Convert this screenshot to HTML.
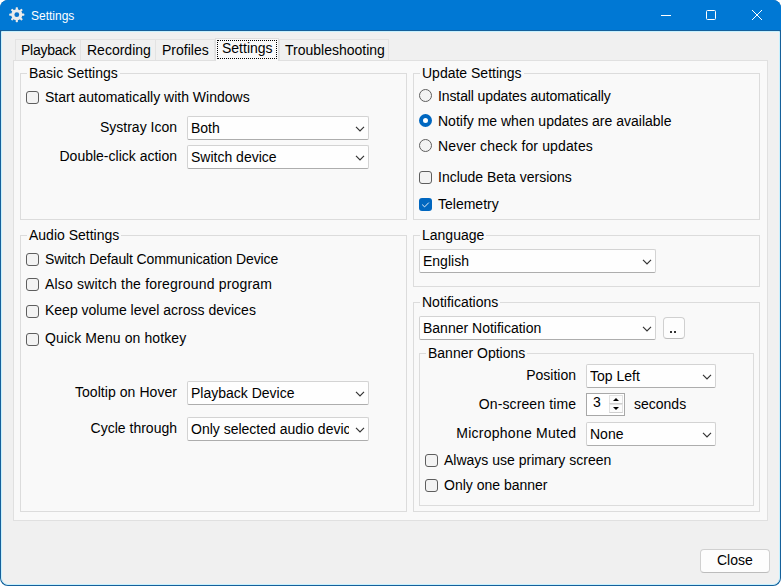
<!DOCTYPE html>
<html><head><meta charset="utf-8">
<style>
html,body{margin:0;padding:0;width:781px;height:586px;overflow:hidden;background:#ffffff;}
*{box-sizing:border-box;}
body{font-family:"Liberation Sans",sans-serif;font-size:14px;color:#000;position:relative;}
.a{position:absolute;}
.t{position:absolute;white-space:nowrap;line-height:16px;color:#000;}
#win{position:absolute;left:0;top:0;width:781px;height:586px;background:#16609a;border-radius:8px;overflow:hidden;}
#tb{position:absolute;left:0;top:0;width:781px;height:30px;background:#0078d4;}
#client{position:absolute;left:1px;top:31px;width:779px;height:554px;background:#f0f0f0;border-top:1px solid #c6f1ff;border-left:1px solid #c6f1ff;border-right:1px solid #c6f1ff;border-bottom:1px solid #c6f1ff;border-radius:0 0 7px 7px;}
.tab{position:absolute;top:39px;height:22px;background:#f0f0f0;border:1px solid #e3e3e3;border-bottom:none;}
#page{position:absolute;left:13px;top:60px;width:755px;height:461px;background:#f9f9f9;border:1px solid #e0e0e0;}
.grp{position:absolute;border:1px solid #dcdcdc;}
.gt{position:absolute;background:#f9f9f9;padding:0 2px;white-space:nowrap;line-height:16px;}
.cb{position:absolute;width:13px;height:13px;border:1px solid #5e5e5e;background:#f3f3f3;border-radius:3px;}
.cbc{position:absolute;width:13px;height:13px;background:#0067c0;border-radius:3px;}
.rb{position:absolute;width:13px;height:13px;border:1px solid #5e5e5e;background:#f3f3f3;border-radius:50%;}
.rbc{position:absolute;width:13px;height:13px;border:4px solid #0067c0;background:#fff;border-radius:50%;}
.combo{position:absolute;background:#fefefe;border:1px solid #d3d3d3;border-bottom-color:#adadad;border-radius:2px;}
.ct{position:absolute;white-space:nowrap;line-height:16px;overflow:hidden;}
.btn{position:absolute;background:#fdfdfd;border:1px solid #d0d0d0;border-bottom-color:#bcbcbc;border-radius:4px;}
</style></head><body>
<div id="win">
  <div id="tb">
    <svg class="a" style="left:9px;top:7px" width="16" height="16" viewBox="0 0 16 16">
      <g transform="translate(7.8 7.7)">
        <g fill="#ececec" stroke="#3a6a94" stroke-opacity="0.35" stroke-width="0.6" paint-order="stroke">
        <circle r="5.5"/>
        <rect x="-1.1" y="-7.5" width="2.2" height="15" rx="0.6"/>
        <rect x="-1.1" y="-7.5" width="2.2" height="15" rx="0.6" transform="rotate(45)"/>
        <rect x="-1.1" y="-7.5" width="2.2" height="15" rx="0.6" transform="rotate(90)"/>
        <rect x="-1.1" y="-7.5" width="2.2" height="15" rx="0.6" transform="rotate(135)"/>
        </g>
        <circle r="5.2" fill="#ececec"/>
        <circle r="2.4" fill="#0a74cc"/>
      </g>
    </svg>
    <div class="t" style="left:31px;top:8px;color:#fff;font-size:12px;">Settings</div>
    <div class="a" style="left:661px;top:15px;width:10px;height:1px;background:#fff"></div>
    <div class="a" style="left:706px;top:10px;width:10px;height:10px;border:1px solid #fff;border-radius:1.5px"></div>
    <svg class="a" style="left:752px;top:10px" width="10" height="10" viewBox="0 0 10 10"><path d="M0 0L10 10M10 0L0 10" stroke="#fff" stroke-width="1"/></svg>
  </div>
  <div id="client"></div>
</div>
<div class="tab" style="left:15px;width:66px;"></div>
<div class="tab" style="left:80px;width:76px;"></div>
<div class="tab" style="left:155px;width:60px;"></div>
<div class="tab" style="left:279px;width:110px;"></div>
<div id="page"></div>
<div class="tab" style="left:215px;top:38px;height:23px;width:64px;background:#f9f9f9;border-color:#dedede;"><div class="a" style="left:1px;top:1px;width:60px;height:19px;border:1px dotted #000;"></div></div>
<div class="t" style="left:21px;top:42px;letter-spacing:-0.25px;">Playback</div>
<div class="t" style="left:87px;top:42px;">Recording</div>
<div class="t" style="left:162px;top:42px;">Profiles</div>
<div class="t" style="left:222px;top:40px;">Settings</div>
<div class="t" style="left:285px;top:42px;">Troubleshooting</div>
<div class="grp" style="left:20px;top:73px;width:387px;height:147px;"></div>
<div class="gt" style="left:27px;top:65px;">Basic Settings</div>
<div class="cb" style="left:26px;top:91px;"></div>
<div class="t" style="left:45px;top:89px;">Start automatically with Windows</div>
<div class="t" style="right:604px;top:119px;">Systray Icon</div>
<div class="combo" style="left:187px;top:116px;width:182px;height:24px;"><div class="ct" style="left:3px;top:3px;width:158px">Both</div><svg style="position:absolute;right:3px;top:9px" width="11" height="7" viewBox="0 0 11 7"><path d="M2 0.9L6 4.9L10 0.9" fill="none" stroke="#333" stroke-width="1.15"/></svg></div>
<div class="t" style="right:604px;top:148px;">Double-click action</div>
<div class="combo" style="left:187px;top:145px;width:182px;height:24px;"><div class="ct" style="left:3px;top:3px;width:158px">Switch device</div><svg style="position:absolute;right:3px;top:9px" width="11" height="7" viewBox="0 0 11 7"><path d="M2 0.9L6 4.9L10 0.9" fill="none" stroke="#333" stroke-width="1.15"/></svg></div>
<div class="grp" style="left:20px;top:235px;width:387px;height:277px;"></div>
<div class="gt" style="left:27px;top:227px;">Audio Settings</div>
<div class="cb" style="left:26px;top:253px;"></div>
<div class="t" style="left:45px;top:251px;letter-spacing:-0.12px;">Switch Default Communication Device</div>
<div class="cb" style="left:26px;top:278px;"></div>
<div class="t" style="left:45px;top:276px;letter-spacing:0.18px;">Also switch the foreground program</div>
<div class="cb" style="left:26px;top:305px;"></div>
<div class="t" style="left:45px;top:302px;">Keep volume level across devices</div>
<div class="cb" style="left:26px;top:333px;"></div>
<div class="t" style="left:45px;top:330px;letter-spacing:0.1px;">Quick Menu on hotkey</div>
<div class="t" style="right:603.94px;top:384px;letter-spacing:0.06px;">Tooltip on Hover</div>
<div class="combo" style="left:187px;top:381px;width:182px;height:24px;"><div class="ct" style="left:3px;top:3px;width:158px">Playback Device</div><svg style="position:absolute;right:3px;top:9px" width="11" height="7" viewBox="0 0 11 7"><path d="M2 0.9L6 4.9L10 0.9" fill="none" stroke="#333" stroke-width="1.15"/></svg></div>
<div class="t" style="right:604px;top:420px;">Cycle through</div>
<div class="combo" style="left:187px;top:417px;width:182px;height:24px;"><div class="ct" style="left:3px;top:3px;width:158px">Only selected audio devices</div><svg style="position:absolute;right:3px;top:9px" width="11" height="7" viewBox="0 0 11 7"><path d="M2 0.9L6 4.9L10 0.9" fill="none" stroke="#333" stroke-width="1.15"/></svg></div>
<div class="grp" style="left:413px;top:73px;width:347px;height:147px;"></div>
<div class="gt" style="left:420px;top:65px;">Update Settings</div>
<div class="rb" style="left:419px;top:89px;"></div>
<div class="t" style="left:438px;top:88px;letter-spacing:-0.11px;">Install updates automatically</div>
<div class="rbc" style="left:419px;top:114px;"></div>
<div class="t" style="left:438px;top:113px;">Notify me when updates are available</div>
<div class="rb" style="left:419px;top:139px;"></div>
<div class="t" style="left:438px;top:138px;letter-spacing:0.14px;">Never check for updates</div>
<div class="cb" style="left:419px;top:171px;"></div>
<div class="t" style="left:438px;top:169px;">Include Beta versions</div>
<div class="cbc" style="left:419px;top:198px;"><svg width="13" height="13" viewBox="0 0 13 13" style="position:absolute;left:0;top:0"><path d="M3.2 6.6L5.6 8.9L9.8 4.6" fill="none" stroke="#fff" stroke-width="0.9"/></svg></div>
<div class="t" style="left:438px;top:196px;">Telemetry</div>
<div class="grp" style="left:413px;top:235px;width:347px;height:52px;"></div>
<div class="gt" style="left:420px;top:227px;">Language</div>
<div class="combo" style="left:419px;top:249px;width:237px;height:24px;"><div class="ct" style="left:3px;top:3px;width:213px">English</div><svg style="position:absolute;right:3px;top:9px" width="11" height="7" viewBox="0 0 11 7"><path d="M2 0.9L6 4.9L10 0.9" fill="none" stroke="#333" stroke-width="1.15"/></svg></div>
<div class="grp" style="left:413px;top:302px;width:347px;height:210px;"></div>
<div class="gt" style="left:420px;top:294px;">Notifications</div>
<div class="combo" style="left:419px;top:316px;width:237px;height:24px;"><div class="ct" style="left:3px;top:3px;width:213px">Banner Notification</div><svg style="position:absolute;right:3px;top:9px" width="11" height="7" viewBox="0 0 11 7"><path d="M2 0.9L6 4.9L10 0.9" fill="none" stroke="#333" stroke-width="1.15"/></svg></div>
<div class="btn" style="left:663px;top:317px;width:22px;height:22px;"></div>
<div class="a" style="left:670px;top:331px;width:2px;height:2px;background:#333"></div><div class="a" style="left:674px;top:331px;width:2px;height:2px;background:#333"></div>
<div class="grp" style="left:419px;top:353px;width:335px;height:153px;"></div>
<div class="gt" style="left:426px;top:345px;">Banner Options</div>
<div class="t" style="right:205px;top:367px;">Position</div>
<div class="combo" style="left:586px;top:364px;width:130px;height:24px;"><div class="ct" style="left:3px;top:3px;width:106px">Top Left</div><svg style="position:absolute;right:3px;top:9px" width="11" height="7" viewBox="0 0 11 7"><path d="M2 0.9L6 4.9L10 0.9" fill="none" stroke="#333" stroke-width="1.15"/></svg></div>
<div class="t" style="right:204.88px;top:396px;letter-spacing:0.12px;">On-screen time</div>
<div class="a" style="left:586px;top:393px;width:39px;height:23px;border:1px solid #a8a8a8;background:#fff;"></div>
<div class="t" style="left:593px;top:394px;">3</div>
<div class="a" style="left:609px;top:395px;width:14px;height:9px;border:1px solid #e2e2e2;border-bottom-color:#cfcfcf;background:#fcfcfc"></div>
<div class="a" style="left:609px;top:404px;width:14px;height:9px;border:1px solid #e2e2e2;border-bottom-color:#cfcfcf;background:#fcfcfc"></div>
<svg class="a" style="left:612px;top:397px" width="8" height="14" viewBox="0 0 8 14"><path d="M4 1L7 4L1 4Z" fill="#000"/><path d="M1 10L7 10L4 13Z" fill="#000"/></svg>
<div class="t" style="left:634px;top:396px;">seconds</div>
<div class="t" style="right:204.75px;top:425px;letter-spacing:0.25px;">Microphone Muted</div>
<div class="combo" style="left:586px;top:422px;width:130px;height:24px;"><div class="ct" style="left:3px;top:3px;width:106px">None</div><svg style="position:absolute;right:3px;top:9px" width="11" height="7" viewBox="0 0 11 7"><path d="M2 0.9L6 4.9L10 0.9" fill="none" stroke="#333" stroke-width="1.15"/></svg></div>
<div class="cb" style="left:425px;top:454px;"></div>
<div class="t" style="left:444px;top:452px;">Always use primary screen</div>
<div class="cb" style="left:425px;top:479px;"></div>
<div class="t" style="left:444px;top:477px;">Only one banner</div>
<div class="btn" style="left:700px;top:549px;width:70px;height:24px;"></div>
<div class="t" style="left:717px;top:552px;">Close</div>
</body></html>
